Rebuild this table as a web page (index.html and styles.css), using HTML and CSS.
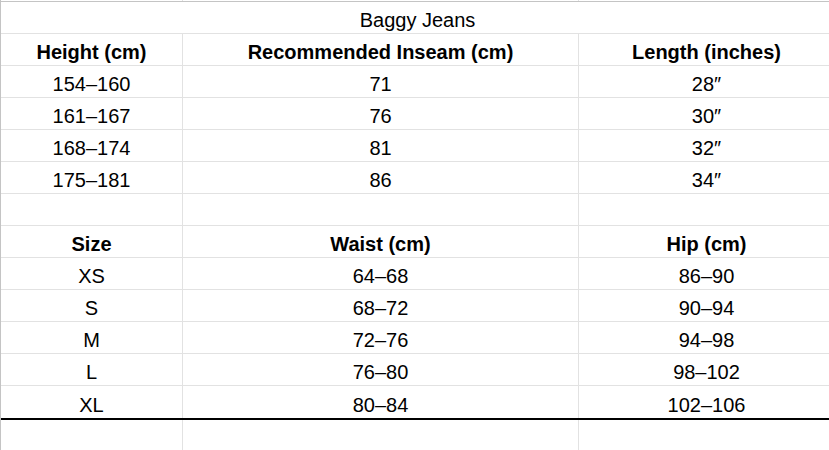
FILE: index.html
```html
<!DOCTYPE html>
<html>
<head>
<meta charset="utf-8">
<link rel="stylesheet" href="styles.css">
</head>
<body>
<div class="sheet">
  <div class="row strip"><div class="c"></div><div class="c"></div><div class="c"></div></div>
  <div class="row title"><div class="c span">Baggy Jeans</div></div>
  <div class="row head"><div class="c">Height (cm)</div><div class="c">Recommended Inseam (cm)</div><div class="c">Length (inches)</div></div>
  <div class="row"><div class="c">154–160</div><div class="c">71</div><div class="c">28″</div></div>
  <div class="row"><div class="c">161–167</div><div class="c">76</div><div class="c">30″</div></div>
  <div class="row"><div class="c">168–174</div><div class="c">81</div><div class="c">32″</div></div>
  <div class="row"><div class="c">175–181</div><div class="c">86</div><div class="c">34″</div></div>
  <div class="row"><div class="c"></div><div class="c"></div><div class="c"></div></div>
  <div class="row head"><div class="c">Size</div><div class="c">Waist (cm)</div><div class="c">Hip (cm)</div></div>
  <div class="row"><div class="c">XS</div><div class="c">64–68</div><div class="c">86–90</div></div>
  <div class="row"><div class="c">S</div><div class="c">68–72</div><div class="c">90–94</div></div>
  <div class="row"><div class="c">M</div><div class="c">72–76</div><div class="c">94–98</div></div>
  <div class="row"><div class="c">L</div><div class="c">76–80</div><div class="c">98–102</div></div>
  <div class="row last"><div class="c">XL</div><div class="c">80–84</div><div class="c">102–106</div></div>
  <div class="row"><div class="c"></div><div class="c"></div><div class="c"></div></div>
</div>
</body>
</html>
```
FILE: styles.css
```css
html, body {
  margin: 0;
  padding: 0;
  background: #fff;
  overflow: hidden;
}
.sheet {
  width: 833px;
  border-left: 1px solid #c4c4c4;
  font-family: "Liberation Sans", Arial, sans-serif;
  font-size: 20px;
  color: #000;
}
.row {
  display: grid;
  grid-template-columns: 182px 396px 1fr;
  height: 32px;
  border-bottom: 1px solid #e2e2e2;
  box-sizing: border-box;
}
.c {
  display: flex;
  justify-content: center;
  align-items: flex-end;
  padding-bottom: 1px;
  line-height: 23px;
  border-right: 1px solid #e2e2e2;
  white-space: nowrap;
}
.row > .c:last-child {
  border-right: none;
}
.strip {
  height: 2px;
  border-bottom: 1px solid #c4c4c4;
}
.strip .c { padding: 0; }
.title .span {
  grid-column: 1 / 4;
  border-right: none;
}
.head .c {
  font-weight: bold;
}
.row.last {
  height: 34px;
  border-bottom: 2px solid #000;
}
```
